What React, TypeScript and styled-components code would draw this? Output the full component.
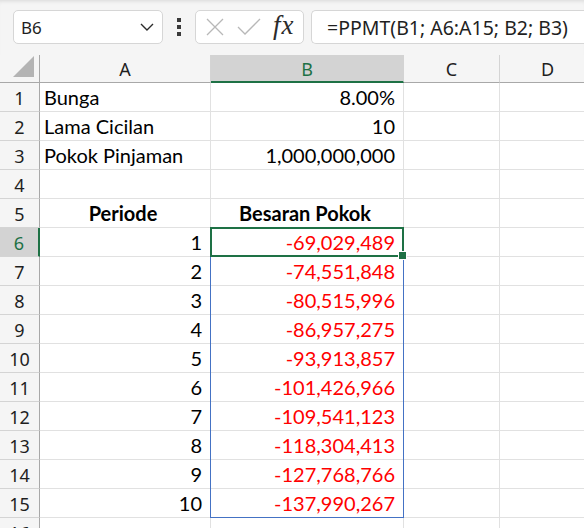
import React from 'react';
import styled, { createGlobalStyle } from 'styled-components';

const GlobalStyle = createGlobalStyle`
	html, body {
		margin: 0;
		padding: 0;
		background: #ffffff;
		overflow: hidden;
	}
	body {
		font-family: 'Noto Sans', 'Open Sans', sans-serif;
	}
`;

const COLS = [40, 171, 193, 96, 96];
const ROW_H = 29;
const HEAD_H = 28;

const Page = styled.div`
	width: 584px;
	height: 528px;
	overflow: hidden;
	background: #ffffff;
`;

const Toolbar = styled.div`
	height: 55px;
	box-sizing: border-box;
	padding: 10px 0 0 13px;
	display: flex;
	align-items: flex-start;
	background: #f5f5f5;
	box-shadow: inset 0 4px 4px -3px rgba(0, 0, 0, 0.12);
`;

const NameBox = styled.div`
	width: 150px;
	height: 34px;
	box-sizing: border-box;
	border: 1px solid #d6d6d6;
	border-radius: 5px;
	background: #ffffff;
	display: flex;
	align-items: center;
	justify-content: space-between;
	padding: 0 6px 0 7px;
	font-size: 17px;
	color: #1f1f1f;
`;

const Dots = styled.div`
	width: 32px;
	height: 34px;
	display: flex;
	align-items: center;
	justify-content: center;
`;

const ButtonGroup = styled.div`
	width: 109px;
	height: 34px;
	box-sizing: border-box;
	border: 1px solid #d6d6d6;
	border-radius: 5px;
	background: #ffffff;
	display: flex;
	align-items: center;
	padding: 0 0 0 8px;
	gap: 10px;
`;

const Fx = styled.span`
	font-family: 'Liberation Serif', 'DejaVu Serif', serif;
	font-style: italic;
	font-size: 27px;
	line-height: 1;
	color: #2b2b2b;
	margin-left: 1px;
	margin-top: -3px;
	letter-spacing: 1px;
`;

const FormulaInput = styled.div`
	flex: 1;
	height: 34px;
	margin-left: 7px;
	box-sizing: border-box;
	border: 1px solid #d6d6d6;
	border-right: none;
	border-radius: 5px 0 0 5px;
	background: #ffffff;
	display: flex;
	align-items: center;
	padding-left: 15px;
	font-size: 19.5px;
	color: #1f1f1f;
	white-space: nowrap;
`;

const Sheet = styled.div`
	position: relative;
	display: grid;
	grid-template-columns: ${COLS.map(c => `${c}px`).join(' ')};
	grid-auto-rows: ${ROW_H}px;
	grid-template-rows: ${HEAD_H}px;
`;

const Corner = styled.div`
	background: #f5f5f5;
	border-right: 1px solid #a8a8a8;
	border-bottom: 1px solid #a8a8a8;
	box-sizing: border-box;
	display: flex;
	align-items: flex-end;
	justify-content: flex-end;
	padding: 0 4px 4px 0;
`;

const ColHead = styled.div<{ $active?: boolean }>`
	box-sizing: border-box;
	background: ${p => (p.$active ? '#d3d3d3' : '#f5f5f5')};
	border-right: 1px solid ${p => (p.$active ? '#d3d3d3' : '#d4d4d4')};
	border-bottom: ${p => (p.$active ? '2px solid #1e7145' : '1px solid #a8a8a8')};
	color: ${p => (p.$active ? '#1e7145' : '#1f1f1f')};
	display: flex;
	align-items: center;
	justify-content: center;
	font-size: 18px;
	padding-top: 1px;
`;

const RowHead = styled.div<{ $active?: boolean }>`
	box-sizing: border-box;
	background: ${p => (p.$active ? '#d3d3d3' : '#f5f5f5')};
	border-right: ${p => (p.$active ? '2px solid #1e7145' : '1px solid #a8a8a8')};
	border-bottom: 1px solid #d4d4d4;
	color: ${p => (p.$active ? '#1e7145' : '#1f1f1f')};
	display: flex;
	align-items: center;
	justify-content: center;
	padding-top: 2px;
	font-size: 18px;
`;

const Cell = styled.div<{ $align?: 'left' | 'right' | 'center'; $bold?: boolean; $red?: boolean }>`
	box-sizing: border-box;
	border-right: 1px solid #e1e1e1;
	border-bottom: 1px solid #e1e1e1;
	display: flex;
	align-items: flex-end;
	justify-content: ${p =>
		p.$align === 'right' ? 'flex-end' : p.$align === 'center' ? 'center' : 'flex-start'};
	padding: 0 8px 2px 4px;
	font-family: 'Lato', 'Noto Sans', sans-serif;
	font-size: 20px;
	font-weight: ${p => (p.$bold ? 700 : 400)};
	color: ${p => (p.$red ? '#ff0000' : '#000000')};
	white-space: nowrap;
	overflow: hidden;
`;

const Selection = styled.div`
	position: absolute;
	box-sizing: border-box;
	border: 2px solid #1e7145;
	pointer-events: none;
`;

const Handle = styled.div`
	position: absolute;
	right: -5px;
	bottom: -5px;
	width: 7px;
	height: 7px;
	background: #1e7145;
	border: 1px solid #ffffff;
`;

const SpillRange = styled.div`
	position: absolute;
	box-sizing: border-box;
	border: 1px solid #4472c4;
	pointer-events: none;
`;

type CellData = { v: string; align?: 'left' | 'right' | 'center'; bold?: boolean; red?: boolean };

const payments = [
	'-69,029,489',
	'-74,551,848',
	'-80,515,996',
	'-86,957,275',
	'-93,913,857',
	'-101,426,966',
	'-109,541,123',
	'-118,304,413',
	'-127,768,766',
	'-137,990,267',
];

const rows: CellData[][] = [
	[{ v: 'Bunga' }, { v: '8.00%', align: 'right' }],
	[{ v: 'Lama Cicilan' }, { v: '10', align: 'right' }],
	[{ v: 'Pokok Pinjaman' }, { v: '1,000,000,000', align: 'right' }],
	[{ v: '' }, { v: '' }],
	[
		{ v: 'Periode', align: 'center', bold: true },
		{ v: 'Besaran Pokok', align: 'center', bold: true },
	],
	...payments.map((p, i) => [
		{ v: String(i + 1), align: 'right' as const },
		{ v: p, align: 'right' as const, red: true },
	]),
	[{ v: '' }, { v: '' }],
];

const ACTIVE_ROW = 6;

function Chevron() {
	return (
		<svg width="18" height="16" viewBox="0 0 18 16" fill="none">
			<path d="M3 5 L9 11 L15 5" stroke="#2b2b2b" strokeWidth="1.4" />
		</svg>
	);
}

function VDots() {
	return (
		<svg width="6" height="20" viewBox="0 0 6 20">
			<rect x="1" y="1" width="4" height="4" fill="#3a3a3a" />
			<rect x="1" y="8" width="4" height="4" fill="#3a3a3a" />
			<rect x="1" y="15" width="4" height="4" fill="#3a3a3a" />
		</svg>
	);
}

function CrossIcon() {
	return (
		<svg width="22" height="22" viewBox="0 0 22 22" fill="none">
			<path d="M3 3 L19 19 M19 3 L3 19" stroke="#b8b8b8" strokeWidth="1.3" />
		</svg>
	);
}

function CheckIcon() {
	return (
		<svg width="26" height="22" viewBox="0 0 26 22" fill="none">
			<path d="M2 11 L9 18 L24 3" stroke="#b8b8b8" strokeWidth="1.3" />
		</svg>
	);
}

function CornerTriangle() {
	return (
		<svg width="22" height="22" viewBox="0 0 22 22">
			<polygon points="0,21 21,21 21,0" fill="#b4b4b4" />
		</svg>
	);
}

export default function App() {
	const colLeft = (i: number) => COLS.slice(0, i).reduce((a, b) => a + b, 0);
	const rowTop = (r: number) => HEAD_H + (r - 1) * ROW_H;

	return (
		<Page>
			<GlobalStyle />
			<Toolbar>
				<NameBox>
					<span>B6</span>
					<Chevron />
				</NameBox>
				<Dots>
					<VDots />
				</Dots>
				<ButtonGroup>
					<CrossIcon />
					<CheckIcon />
					<Fx>fx</Fx>
				</ButtonGroup>
				<FormulaInput>=PPMT(B1; A6:A15; B2; B3)</FormulaInput>
			</Toolbar>
			<Sheet>
				<Corner>
					<CornerTriangle />
				</Corner>
				{['A', 'B', 'C', 'D'].map(l => (
					<ColHead key={l} $active={l === 'B'}>
						{l}
					</ColHead>
				))}
				{rows.map((r, i) => {
					const n = i + 1;
					return (
						<React.Fragment key={n}>
							<RowHead $active={n === ACTIVE_ROW}>{n}</RowHead>
							{r.map((c, j) => (
								<Cell key={j} $align={c.align} $bold={c.bold} $red={c.red}>
									{c.v}
								</Cell>
							))}
							<Cell />
							<Cell />
						</React.Fragment>
					);
				})}
				<SpillRange
					style={{
						left: colLeft(2) - 1,
						top: rowTop(6) - 1,
						width: COLS[2] + 1,
						height: ROW_H * 10 + 1,
					}}
				/>
				<Selection
					style={{
						left: colLeft(2) - 1,
						top: rowTop(6) - 1,
						width: COLS[2] + 1,
						height: ROW_H + 1,
					}}
				>
					<Handle />
				</Selection>
			</Sheet>
		</Page>
	);
}
